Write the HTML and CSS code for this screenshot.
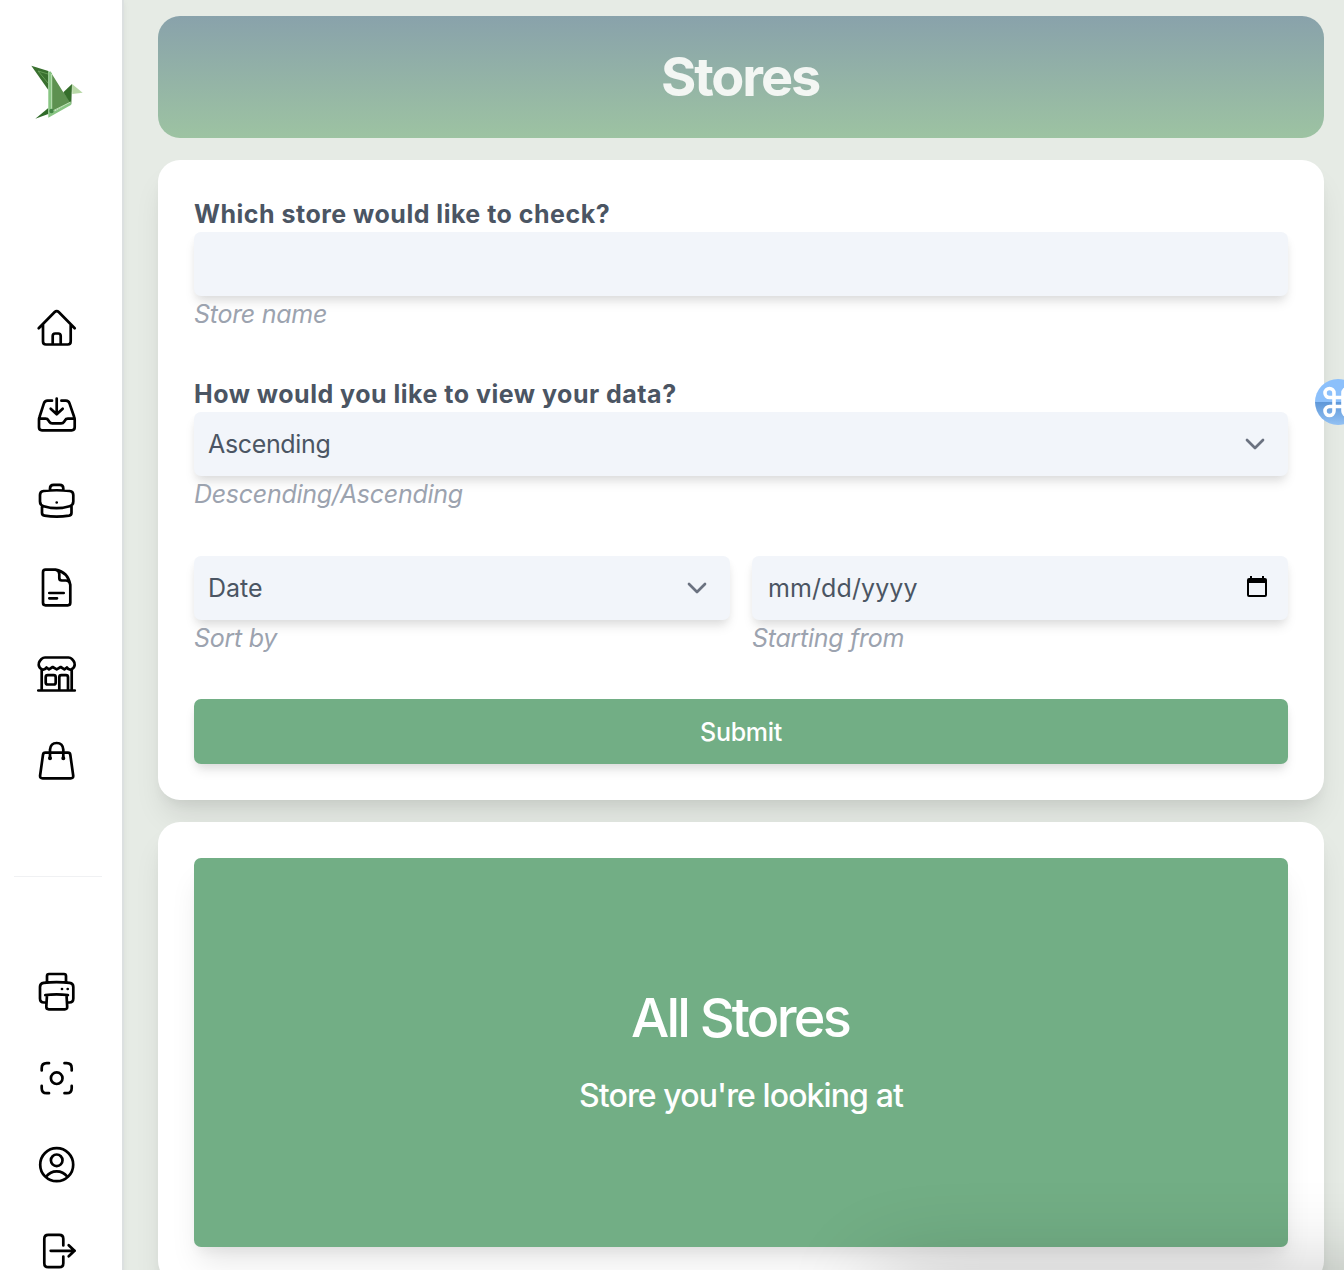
FILE: index.html
```html
<!DOCTYPE html>
<html lang="en">
<head>
<meta charset="utf-8">
<title>Stores</title>
<link rel="stylesheet" href="styles.css">
</head>
<body>
<div class="app">
  <aside class="sidebar">
    <a class="logo" href="#" aria-label="Home">
      <svg width="64" height="64" viewBox="0 0 64 64">
        <path fill="#39702f" d="M6.3 5.7 23.3 11V30z"/>
        <path fill="none" stroke="#6fa85f" stroke-width=".8" d="M23 14 13 11l10 12"/>
        <path fill="#2f6a28" d="M10.3 58.7 23.3 48v6z"/>
        <path fill="#5d9150" d="M25 11 38.3 32.3 46 42 29 51l-3-1z"/>
        <path fill="#356e2b" d="M38.3 32.3 47 24l-.7 20.3z"/>
        <path fill="#b9d9a8" d="M47 24l10.700 8.700-10.400 1.300z"/>
        <path fill="#88c583" d="M23.300 11 27 13v37l3 1 15.500-9 .8 2.700-23 13z"/>
        <path stroke="#bde2b5" fill="none" d="M26.700 14v37.500l19-9.500"/>
        <circle cx="26.500" cy="51" r="2.200" fill="#438545"/>
      </svg>
    </a>
    <nav class="nav nav-main">
      <a href="#" aria-label="Home"><svg class="icon" viewBox="0 0 44 44"><path d="M3.700 22.200 19.700 6q2-2 4 0l16 16.200M8 18.500v17q0 3 3 3h21.700q3 0 3-3v-17M17.700 38v-8q0-2.500 2.500-2.500h3q2.500 0 2.500 2.500v8"/></svg></a>
      <a href="#" aria-label="Inbox"><svg class="icon" viewBox="0 0 44 44"><path d="M21.700 5.500v15.800M15.700 15.700l6 5.600 6-5.600M17 7.700h-4.500q-2.700 0-3.600 2.700L4.500 24q-.5 1-.5 2.500v7.800q0 3 3 3h29.700q3 0 3-3v-7.800q0-1.500-.5-2.500L34.500 10.400q-.9-2.700-3.600-2.700h-4.500M4 25.700h6.500q2 0 3 1.800l.8 1.200q1 1.600 3 1.600h8.800q2 0 3-1.600l.8-1.200q1-1.800 3-1.800h6.500"/></svg></a>
      <a href="#" aria-label="Work"><svg class="icon" viewBox="0 0 44 44"><path d="M15 11v-1.500q0-3.700 3.700-3.700h6q3.600 0 3.600 3.700V11M5 16q0-3.600 3.600-4 13-1.500 26 0 3.700.4 3.700 4v6.500q0 3.600-3.700 4.700-13 4-26 0Q5 26.100 5 22.500zM7 26.500v7.300q0 2.500 2.500 2.900 12 1.700 24.500 0 2.500-.4 2.500-2.900v-7.300M21.700 23.500h.01"/></svg></a>
      <a href="#" aria-label="Documents"><svg class="icon" viewBox="0 0 44 44"><path d="M20.500 3.700H10.500Q8 3.700 8 6.200v30.600q0 2.500 2.500 2.500h22.300q2.500 0 2.500-2.500V19Q33 6 20.500 3.700zM20.500 3.700q3.800.8 3.800 4.300v4q0 2.500 2.500 2.500h4q3.500 0 4.500 4M14.300 27h14.400M14.300 32.300H22"/></svg></a>
      <a href="#" aria-label="Stores"><svg class="icon" viewBox="0 0 44 44"><path d="M10 5.500h23.500q2 0 3.300 1.400l1.700 2q1.500 2 1.200 4-.4 3.400-3.600 4.600-2.700.6-4.200-2l-2.500 1.800-3.700-2.300-4 2.300-4-2.300-3.700 2.300-2.500-1.800q-1.500 2.600-4.200 2-3.200-1.200-3.600-4.600-.3-2 1.200-4l1.700-2Q8 5.500 10 5.500zM3.300 38.500h36.500M6.700 17.500v21M36.700 17.500v21M12.700 23.200h6q2 0 2 2v5.300q0 2-2 2h-6q-2 0-2-2v-5.300q0-2 2-2zM24.300 38V25.200q0-2 2-2H31q2 0 2 2V38"/></svg></a>
      <a href="#" aria-label="Shopping"><svg class="icon" viewBox="0 0 44 44"><path d="M10.300 13.700H33q2 0 2.300 2L38.200 36.500q.3 2.800-2.500 2.800H7.600q-2.800 0-2.500-2.800L8 15.700q.3-2 2.300-2zM15 19v-8.300Q15.600 4 21.700 4t6.600 6.700V19"/><path class="dot" d="M15 19.200h.01M28.300 19.200h.01"/></svg></a>
    </nav>
    <hr class="divider">
    <nav class="nav nav-tools">
      <a href="#" aria-label="Print"><svg class="icon" viewBox="0 0 44 44"><path d="M12 12V6q0-2 2-2h15q2 0 2 2v6M10.500 32.500H9q-4 0-4-4V17q0-3.600 3.600-4.100 13-1.700 26 0Q38.300 13.400 38.300 17v11.500q0 4-4 4h-1.500M10.300 25q11.300-1.400 22.600 0M12 25l-.7 11.800q0 2.500 2.500 2.500h16q2.500 0 2.400-2.500L31.500 25M27 19h.01M32.700 19h.01"/></svg></a>
      <a href="#" aria-label="Scan"><svg class="icon" viewBox="0 0 44 44"><path d="M14 7.200h-2.300q-5 0-5 5v2.300M29.500 7.200h2.200q5 0 5 5v2.300M14 37.200h-2.300q-5 0-5-5v-2.300M29.500 37.200h2.200q5 0 5-5v-2.300"/><circle cx="21.700" cy="22.200" r="5.800"/></svg></a>
      <a href="#" aria-label="Profile"><svg class="icon" viewBox="0 0 44 44"><circle cx="21.700" cy="21.700" r="16.500"/><circle cx="21.700" cy="17.300" r="5.800"/><path d="M11.200 33.500q4-5.200 10.500-5.200t10.500 5.200"/></svg></a>
      <a href="#" aria-label="Sign out"><svg class="icon" viewBox="0 0 44 44"><path d="M28.300 16.500v-6.700q0-4-4-4h-11q-4 0-4 4v24.400q0 4 4 4h11q4 0 4-4v-6.700M15.700 21.800h24M33.700 16.300l5.800 5.500-5.800 5.500"/></svg></a>
    </nav>
  </aside>

  <main class="content">
    <header class="banner"><h1>Stores</h1></header>

    <form class="card form">
      <div class="field">
        <label class="label" for="store">Which store would like to check?</label>
        <input class="control" id="store" type="text">
        <p class="hint">Store name</p>
      </div>
      <div class="field">
        <span class="label">How would you like to view your data?</span>
        <div class="control select"><span>Ascending</span><svg class="chevron" viewBox="0 0 20 12"><path d="M2 2l8 8 8-8"/></svg></div>
        <p class="hint">Descending/Ascending</p>
      </div>
      <div class="row">
        <div class="field">
          <div class="control"><span>Date</span><svg class="chevron" viewBox="0 0 20 12"><path d="M2 2l8 8 8-8"/></svg></div>
          <p class="hint">Sort by</p>
        </div>
        <div class="field">
          <div class="control date"><span>mm/dd/yyyy</span><svg class="calendar" viewBox="0 0 20 22"><path fill-rule="evenodd" d="M2 2h1V0h2v2h10V0h2v2h1q2 0 2 2v15q0 2-2 2H2q-2 0-2-2V4q0-2 2-2zM2 7v12h16V7z"/></svg></div>
          <p class="hint">Starting from</p>
        </div>
      </div>
      <button class="submit" type="button">Submit</button>
    </form>

    <section class="card results">
      <div class="tile">
        <h2>All Stores</h2>
        <p>Store you're looking at</p>
      </div>
    </section>
  </main>

  <div class="shortcut">
    <svg width="46" height="46" viewBox="0 0 46 46"><path d="M19 18.500h9v9h-9zM19 18.500h-4.500a4.500 4.500 0 1 1 4.500-4.500zM28 18.500v-4.500a4.500 4.500 0 1 1 4.500 4.500zM28 27.500h4.500a4.500 4.500 0 1 1-4.500 4.500zM19 27.500v4.500a4.500 4.500 0 1 1-4.500-4.500z"/></svg>
  </div>
  <div class="edge-shadow"></div>
</div>
</body>
</html>
```
FILE: styles.css
```css
* { box-sizing: border-box; }
body { margin: 0; background: #e6ebe5; font-family: Inter, "Liberation Sans", sans-serif; }
h1, h2, p { margin: 0; }

.app { position: relative; display: flex; width: 1344px; height: 1270px; overflow: hidden; }

.sidebar {
  display: flex; flex-direction: column; flex: none;
  width: 124px; height: 1330px; padding: 60px 0 0;
  background: #fff; border-right: 2px solid #dce0e0;
  box-shadow: 0 2px 6px rgba(0, 0, 0, .06);
}
.logo { height: 64px; margin-left: 25px; }
.logo svg { display: block; }
.nav { display: flex; flex-direction: column; padding-left: 34.7px; }
.nav a { display: flex; align-items: center; height: 86.5px; }
.nav-main { margin-top: 161px; }
.divider { width: 88px; height: 1px; margin: 72px 0 71.5px 14px; border: 0; background: #f0f1f3; flex: none; }
.icon { width: 44px; height: 44px; fill: none; stroke: #000; stroke-width: 2.7; stroke-linecap: round; stroke-linejoin: round; }
.icon .dot { stroke-width: 4; }

.content { display: flex; flex-direction: column; gap: 22px; width: 1166px; margin-left: 34px; padding-top: 16px; }
.banner {
  display: flex; align-items: center; justify-content: center; flex: none;
  height: 122px; border-radius: 22px;
  background: linear-gradient(#89a2ab, #9dc3a2);
}
.banner h1 { padding-right: 2px; font-size: 54px; line-height: 60px; font-weight: 700; color: #f3f6f3; letter-spacing: -2.1px; }

.card {
  flex: none; padding: 36px; background: #fff; border-radius: 22px;
  box-shadow: 0 20px 30px -6px rgba(0, 0, 0, .1), 0 8px 12px -4px rgba(0, 0, 0, .05);
}
.form { height: 640px; }
.field { display: flex; flex-direction: column; flex: 1; }
.label { height: 36px; line-height: 36px; font-size: 25px; font-weight: 650; color: #4b5563; letter-spacing: .5px; white-space: nowrap; }
.control {
  display: flex; align-items: center; justify-content: space-between;
  width: 100%; height: 64px; padding: 0 23px 0 14px; border: 0; border-radius: 7px;
  background: #f2f5fa; color: #4b5563; font-size: 25px;
  box-shadow: 0 8px 12px -2px rgba(0, 0, 0, .1), 0 4px 8px -2px rgba(0, 0, 0, .06);
}
.select { letter-spacing: -.35px; }
.date { padding: 0 21px 0 16px; letter-spacing: .1px; }
.hint { height: 36px; line-height: 36px; font-size: 25px; font-style: italic; color: #9ca3af; letter-spacing: -.28px; }
.form > .field { height: 136px; margin-bottom: 44px; }
.row { display: flex; gap: 22px; height: 100px; margin-bottom: 43px; }
.chevron { width: 20px; height: 12px; fill: none; stroke: #6b7280; stroke-width: 2.7; stroke-linecap: round; stroke-linejoin: round; }
.calendar { width: 20px; height: 22px; margin-top: -2px; }
.submit {
  width: 100%; height: 65px; border: 0; border-radius: 7px; background: #72ae85;
  color: #fff; font: 500 25px Inter, "Liberation Sans", sans-serif; letter-spacing: -.3px;
  box-shadow: 0 8px 12px -2px rgba(0, 0, 0, .1), 0 4px 8px -2px rgba(0, 0, 0, .06);
}

.results { height: 461px; }
.tile {
  display: flex; flex-direction: column; align-items: center; gap: 23px;
  height: 389px; padding-top: 130px; border-radius: 7px; background: #72ae85; color: #fff;
  box-shadow: 0 20px 30px -6px rgba(0, 0, 0, .1), 0 8px 12px -4px rgba(0, 0, 0, .05);
}
.tile h2 { padding-right: 2px; font-size: 54px; line-height: 60px; font-weight: 500; letter-spacing: -2.8px; }
.tile p { font-size: 32px; line-height: 50px; font-weight: 500; letter-spacing: -.9px; }

.shortcut {
  position: absolute; left: 1315px; top: 379px; width: 46px; height: 46px; border-radius: 50%;
  background: linear-gradient(#8cc0fb 50%, #5e97d8 50%, #93c1f3);
}
.shortcut svg { display: block; fill: none; stroke: #fff; stroke-width: 3.6; }
.edge-shadow { position: absolute; left: 880px; top: 1278px; width: 600px; height: 100px; box-shadow: 0 0 95px rgba(0, 0, 0, .24); }
```
